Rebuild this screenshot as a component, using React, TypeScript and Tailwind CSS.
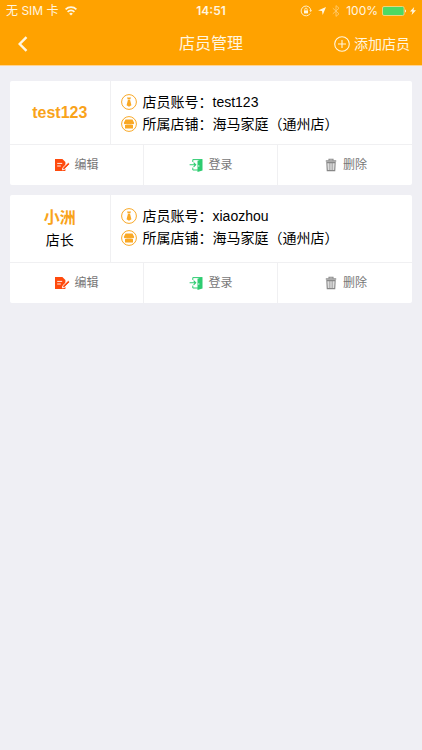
import React from "react";

type Clerk = { name: string; role?: string; account: string; store: string };

const clerks: Clerk[] = [
  { name: "test123", account: "test123", store: "海马家庭（通州店）" },
  { name: "小洲", role: "店长", account: "xiaozhou", store: "海马家庭（通州店）" },
];

function TieIcon() {
  return (
    <svg className="size-4 shrink-0 text-[#f9a825]" viewBox="0 0 16 16" fill="none" aria-hidden="true">
      <circle cx="8" cy="8" r="7.4" stroke="currentColor" strokeWidth="1" />
      <path d="M6 3.4h4L9.2 5.5H6.8ZM6.9 6h2.2l1.3 5.3L8 12.8l-2.4-1.5Z" fill="currentColor" />
    </svg>
  );
}

function StoreIcon() {
  return (
    <svg className="size-4 shrink-0 text-[#f9a825]" viewBox="0 0 16 16" fill="none" aria-hidden="true">
      <circle cx="8" cy="8" r="7.4" stroke="currentColor" strokeWidth="1" />
      <path
        d="M4.5 3.6h7l1.6 3.2v.5a1.3 1.3 0 0 1-2.4.4 1.5 1.5 0 0 1-2.7 0 1.5 1.5 0 0 1-2.7 0 1.3 1.3 0 0 1-2.4-.4v-.5Z"
        fill="currentColor"
      />
      <path d="M4 9q1 0 1.5-.5 1.2.9 2.5 0 1.3.9 2.5 0Q11 9 12 9v3.6H4Z" fill="currentColor" />
    </svg>
  );
}

function EditIcon() {
  return (
    <svg className="h-4 w-4 shrink-0" viewBox="0 0 16 16" fill="none" aria-hidden="true">
      <path d="M1 2h7.4L11.4 5v9H1Z" fill="#ff4a0d" />
      <path d="M3.2 6.4h5M3.2 9h3.6" stroke="#fff" strokeWidth="0.9" />
      <path d="m8.4 12.9.5-2.3L14.2 5.4l1.7 1.7-5.3 5.2Z" fill="#ff4a0d" stroke="#fff" strokeWidth="0.9" />
    </svg>
  );
}

function LoginIcon() {
  return (
    <svg className="h-4 w-4 shrink-0 text-[#2ecc71]" viewBox="0 0 16 16" fill="none" aria-hidden="true">
      <path d="M4.8 5V2.6H14M4.8 10.6V13H10" stroke="currentColor" strokeWidth="1" />
      <path d="m9.5 3.8 5-1.7v11.4l-5 1.4Z" fill="currentColor" />
      <path d="M1.6 7.8h6M5.6 5.7l2.1 2.1-2.1 2.1" stroke="currentColor" strokeWidth="1.1" />
      <path d="M10.8 8.2v1.6" stroke="#fff" strokeWidth="0.8" />
    </svg>
  );
}

function TrashIcon() {
  return (
    <svg className="h-4 w-4 shrink-0 text-[#888888]" viewBox="0 0 16 16" fill="none" stroke="currentColor" aria-hidden="true">
      <path d="M2.8 4h10.4" strokeWidth="1.4" />
      <path d="M6 3.5V2.2h4v1.3" strokeWidth="1.1" />
      <path d="M3.9 5.7h8.2l-.4 8H4.3Z" strokeWidth="1.2" />
      <path d="M6.2 6v7.4M8 6v7.4M9.8 6v7.4" strokeWidth="0.9" />
    </svg>
  );
}

function StatusBar() {
  return (
    <div className="grid h-[22px] grid-cols-[1fr_auto_1fr] items-center px-1.5 font-['Inter','Noto_Sans_CJK_SC',sans-serif] text-xs text-[#fff6e0]">
      <div className="flex items-center gap-1.5">
        <span>无 SIM 卡</span>
        <svg className="h-2.5 w-3" viewBox="0 0 12 10" fill="none" stroke="currentColor" strokeWidth="1.8" aria-label="Wi-Fi">
          <path d="M.6 3.3a7.8 7.8 0 0 1 10.8 0M2.6 5.8a5 5 0 0 1 6.8 0" />
          <path d="M6 9.6 4.2 7.7a2.6 2.6 0 0 1 3.6 0Z" fill="currentColor" stroke="none" />
        </svg>
      </div>
      <span className="font-semibold">14:51</span>
      <div className="flex items-center justify-end">
        <svg className="mr-1.5 size-3 shrink-0" viewBox="0 0 12 12" fill="none" stroke="currentColor" aria-hidden="true">
          <path d="M10.2 8.5A4.9 4.9 0 1 1 10.9 5.5" strokeWidth="0.9" />
          <path d="M9.3 5.3h2.7l-1.3 1.8Z" fill="currentColor" stroke="none" />
          <path d="M4 5.4h4v3H4Z" fill="currentColor" stroke="none" />
          <path d="M4.8 5.5V4.3a1.2 1.2 0 0 1 2.4 0v1.2" strokeWidth="0.8" />
        </svg>
        <svg className="mr-1.5 size-2 shrink-0" viewBox="0 0 8 8" fill="currentColor" aria-hidden="true">
          <path d="M8 0 4.7 8 4 4 0 3.4Z" />
        </svg>
        <svg className="mr-1.5 h-3 w-2 shrink-0 opacity-50" viewBox="0 0 8 12" fill="none" stroke="currentColor" strokeWidth="0.9" aria-hidden="true">
          <path d="m.8 3.2 6.2 5.6L4 11.4V.6l3 2.6L.8 8.8" />
        </svg>
        <span className="mr-1">100%</span>
        <svg className="mr-1 h-2.5 w-6 shrink-0" viewBox="0 0 24 10" aria-hidden="true">
          <rect x="0.5" y="0.5" width="21.6" height="9" rx="1.5" fill="#4cd964" stroke="#ffd98f" strokeWidth="0.8" />
          <path d="M23 3.4q1 .4 1 1.6t-1 1.6Z" fill="currentColor" />
        </svg>
        <svg className="h-2 w-1.5 shrink-0" viewBox="0 0 6 8" fill="currentColor" aria-hidden="true">
          <path d="M4.2 0 0 4.6h2.4L1.6 8 6 3.3H3.5Z" />
        </svg>
      </div>
    </div>
  );
}

function Action({ icon, label }: { icon: React.ReactNode; label: string }) {
  return (
    <button type="button" className="flex h-10 items-center justify-center gap-1 text-xs text-[#777777]">
      {icon}
      <span>{label}</span>
    </button>
  );
}

function ClerkCard({ clerk }: { clerk: Clerk }) {
  return (
    <article className="rounded-xs bg-white">
      <div className={`flex border-b border-[#f0f0f2] ${clerk.role ? "h-17" : "h-16"}`}>
        <div className="flex w-1/4 flex-col items-center justify-center border-r border-[#f0f0f2]">
          <h2 className="text-base leading-[22px] font-bold text-[#f9a31a]">{clerk.name}</h2>
          {clerk.role && <p className="text-sm leading-[22px] text-black">{clerk.role}</p>}
        </div>
        <div className="flex-1 pt-2.5 pl-2.5 text-sm leading-[22px] text-black">
          <p className="flex items-center gap-1.5">
            <TieIcon />
            <span>店员账号：{clerk.account}</span>
          </p>
          <p className="flex items-center gap-1.5">
            <StoreIcon />
            <span>所属店铺：{clerk.store}</span>
          </p>
        </div>
      </div>
      <div className="grid grid-cols-3 divide-x divide-[#f0f0f2]">
        <Action icon={<EditIcon />} label="编辑" />
        <Action icon={<LoginIcon />} label="登录" />
        <Action icon={<TrashIcon />} label="删除" />
      </div>
    </article>
  );
}

export default function App() {
  return (
    <div className="min-h-screen bg-[#efeff4] font-['Liberation_Sans','Noto_Sans_CJK_SC',sans-serif]">
      <header className="border-b border-[#ffd391] bg-[#ffa200]">
        <StatusBar />
        <nav className="grid h-[43px] grid-cols-[1fr_auto_1fr] items-center px-3 text-[#fff6e0]">
          <button type="button" aria-label="返回" className="flex size-5 items-center justify-center">
            <svg className="h-4 w-3" viewBox="0 0 12 16" fill="none" stroke="currentColor" strokeWidth="2.4" aria-hidden="true">
              <path d="M10.5 1.2 3.7 8l6.8 6.8" />
            </svg>
          </button>
          <h1 className="text-base">店员管理</h1>
          <button type="button" className="flex items-center gap-1 justify-self-end text-sm">
            <svg className="size-4" viewBox="0 0 16 16" fill="none" stroke="currentColor" strokeWidth="1.1" aria-hidden="true">
              <circle cx="8" cy="8" r="7.3" />
              <path d="M8 4v8M4 8h8" />
            </svg>
            <span>添加店员</span>
          </button>
        </nav>
      </header>
      <main className="flex flex-col gap-2.5 px-2.5 pt-[15px]">
        {clerks.map((clerk) => (
          <ClerkCard key={clerk.account} clerk={clerk} />
        ))}
      </main>
    </div>
  );
}
